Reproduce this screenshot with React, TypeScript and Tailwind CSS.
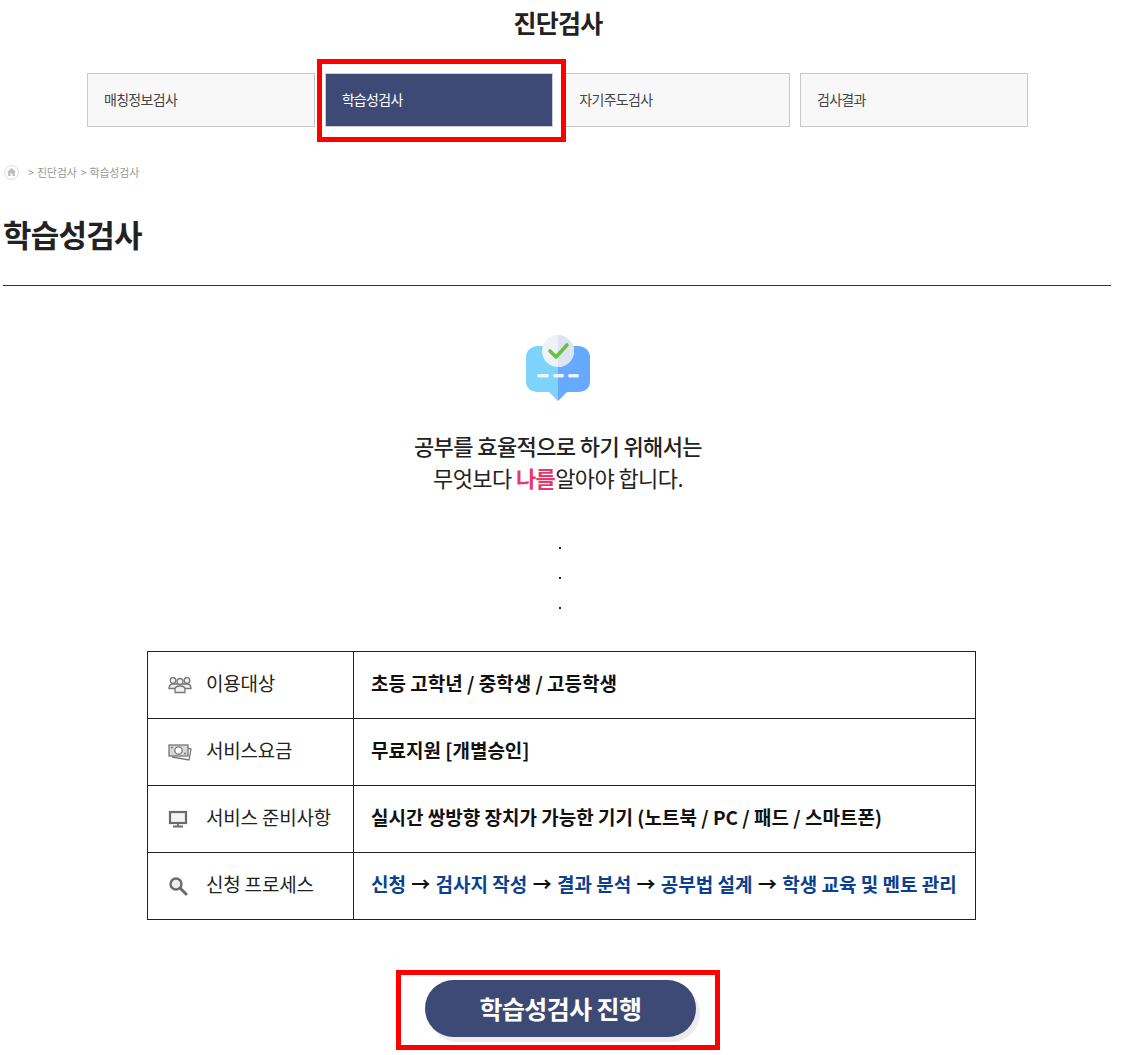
import React from 'react';

const font = { fontFamily: '"Noto Sans CJK KR", "Noto Sans", sans-serif' };

const tabs = ['매칭정보검사', '학습성검사', '자기주도검사', '검사결과'];

const PeopleIcon = () => (
  <svg width="24" height="20" viewBox="0 0 24 20" fill="#f2f2f2" stroke="#777" strokeWidth="1.300">
    <circle cx="5" cy="5.500" r="2.800" />
    <circle cx="19" cy="5.500" r="2.800" />
    <path d="M1 13.500c0-3 1.500-4.500 4-4.500h14c2.500 0 4 1.500 4 4.500z" />
    <circle cx="12" cy="6.500" r="3" />
    <path d="M7 17.500v-3c0-2.500 2-3.500 5-3.500s5 1 5 3.500v3z" />
  </svg>
);

const MoneyIcon = () => (
  <svg width="24" height="20" viewBox="0 0 24 20" fill="none" stroke="#777" strokeWidth="1.300">
    <path d="M19 6l4 1-2 11-17-3" />
    <rect x="1" y="3" width="19" height="11" fill="#d8d8d8" />
    <circle cx="10.500" cy="8.500" r="3.700" fill="#fff" />
    <path d="M3 5.500h2M16 11.500h2" />
  </svg>
);

const MonitorIcon = () => (
  <svg width="20" height="18" viewBox="0 0 20 18" fill="none">
    <rect x="2" y="2" width="16" height="11" fill="#f4f4f4" stroke="#6a6a6a" strokeWidth="2.200" />
    <path d="M10 13v3M5 16.500h10" stroke="#6a6a6a" strokeWidth="1.800" />
  </svg>
);

const SearchIcon = () => (
  <svg width="20" height="20" viewBox="0 0 20 20" fill="none">
    <circle cx="8" cy="8" r="5.500" fill="#eee" stroke="#6a6a6a" strokeWidth="2.400" />
    <path d="M12.500 12.500l5.500 5.500" stroke="#6a6a6a" strokeWidth="3" strokeLinecap="round" />
  </svg>
);

const ChatCheckIcon = () => (
  <svg width="66" height="68" viewBox="0 0 66 68">
    <path d="M33 12H13C6 12 1 17 1 23v25c0 6 5 10 12 10h11l9 9z" fill="#7dd3fc" />
    <path d="M33 12h20c7 0 12 5 12 11v25c0 6-5 10-12 10H42l-9 9z" fill="#66aaff" />
    <circle cx="33" cy="17" r="16" fill="#eef3fa" />
    <path d="M33 1a16 16 0 0 1 0 32z" fill="#dde5f2" />
    <path d="M25 17l6 6 11-12" fill="none" stroke="#6cc13c" strokeWidth="3.600" strokeLinecap="round" strokeLinejoin="round" />
    <rect x="12" y="40" width="12" height="3.500" rx="1.700" fill="#eef3fa" />
    <rect x="28" y="40" width="11" height="3.500" rx="1.700" fill="#eef3fa" />
    <rect x="43" y="40" width="11" height="3.500" rx="1.700" fill="#eef3fa" />
  </svg>
);

const Arrow = () => <span className="text-[#111] px-[1px]"> → </span>;

const rows = [
  { icon: <PeopleIcon />, label: '이용대상', value: <span>초등 고학년 / 중학생 / 고등학생</span> },
  { icon: <MoneyIcon />, label: '서비스요금', value: <span>무료지원 [개별승인]</span> },
  { icon: <MonitorIcon />, label: '서비스 준비사항', value: <span>실시간 쌍방향 장치가 가능한 기기 (노트북 / PC / 패드 / 스마트폰)</span> },
  {
    icon: <SearchIcon />,
    label: '신청 프로세스',
    value: (
      <span className="text-[#0b3f8f]">
        신청<Arrow />검사지 작성<Arrow />결과 분석<Arrow />공부법 설계<Arrow />학생 교육 및 멘토 관리
      </span>
    ),
  },
];

export default function App() {
  return (
    <div className="relative w-[1125px] h-[1055px] overflow-hidden bg-white text-[#222]" style={font}>
      <div className="w-[1116px] flex flex-col">
        <h1 className="h-[47px] pt-[3px] text-center text-[25px] leading-[38px] font-bold tracking-[-0.7px] text-[#222]">진단검사</h1>

        <div className="mt-[26px] pl-[87px] flex gap-[9.67px]">
          {tabs.map((tab, i) => (
            <div
              key={tab}
              className={
                i === 1
                  ? 'w-[228px] h-[54px] pl-[16px] pb-[1px] flex items-center bg-[#3d4a75] border border-[#c9cdd8] text-white text-[14px] tracking-[-0.7px]'
                  : 'w-[228px] h-[54px] pl-[16px] pb-[1px] flex items-center bg-[#f8f8f8] border border-[#c8c8c8] text-[#444] text-[14px] tracking-[-0.7px]'
              }
            >
              {tab}
            </div>
          ))}
        </div>

        <div className="mt-[36px] pl-[4px] h-[18px] flex items-center text-[11px] tracking-[-0.2px] text-[#999]">
          <span className="w-[15px] h-[15px] rounded-full border border-[#ddd] flex items-center justify-center">
            <svg width="9" height="8" viewBox="0 0 9 8"><path d="M4.500 0L9 4H7.800v4H5.500V5.500h-2V8H1.200V4H0z" fill="#bbb" /></svg>
          </span>
          <span className="ml-[9px]">&gt;</span>
          <span className="ml-[3px]">진단검사</span>
          <span className="ml-[4px]">&gt;</span>
          <span className="ml-[3px]">학습성검사</span>
        </div>

        <h2 className="mt-[30px] pl-[3px] h-[48px] text-[31px] leading-[46px] font-bold tracking-[-0.8px] text-[#222]">학습성검사</h2>

        <div className="mt-[26px] ml-[3px] w-[1108px] h-px bg-[#333]" />

        <div className="mt-[48px] flex flex-col items-center">
          <ChatCheckIcon />
          <p className="mt-[27px] text-[22px] leading-[32px] font-medium tracking-[-0.6px] text-[#222] text-center">공부를 효율적으로 하기 위해서는</p>
          <p className="text-[22px] leading-[32px] tracking-[-0.6px] text-[#222] text-center">
            무엇보다 <b className="font-bold text-[#e5386d]">나를</b>알아야 합니다.
          </p>
          <div className="mt-[54px] flex flex-col items-center gap-[28px] pl-[4px]">
            <span className="w-[2px] h-[2px] bg-[#222]" />
            <span className="w-[2px] h-[2px] bg-[#222]" />
            <span className="w-[2px] h-[2px] bg-[#222]" />
          </div>
        </div>

        <table className="mt-[42px] ml-[147px] w-[829px] h-[269px] border-collapse table-fixed">
          <tbody>
            {rows.map(row => (
              <tr key={row.label} className="h-[67px]">
                <td className="w-[206px] border border-[#222] p-0">
                  <div className="flex items-center">
                    <span className="w-[58px] pl-[20px] flex items-center">{row.icon}</span>
                    <span className="pb-[3px] text-[19px] tracking-[-0.2px] text-[#222] whitespace-nowrap">{row.label}</span>
                  </div>
                </td>
                <td className="border border-[#222] pl-[17px] pb-[3px] text-[19px] font-bold text-[#111] whitespace-nowrap">{row.value}</td>
              </tr>
            ))}
          </tbody>
        </table>

        <div className="mt-[60px] ml-[425px] w-[271px] h-[57px] rounded-full bg-[#3d4a75] shadow-[4px_5px_0_#ececec] flex items-center justify-center text-white text-[25px] font-bold tracking-[-0.6px]">
          학습성검사 진행
        </div>
      </div>

      {/* red annotation boxes drawn over the screenshot */}
      <div className="absolute left-[317px] top-[59px] w-[249px] h-[83px] border-[5px] border-[#ff0000] pointer-events-none" />
      <div className="absolute left-[396px] top-[970px] w-[324px] h-[80px] border-[5px] border-[#ff0000] pointer-events-none" />
    </div>
  );
}
